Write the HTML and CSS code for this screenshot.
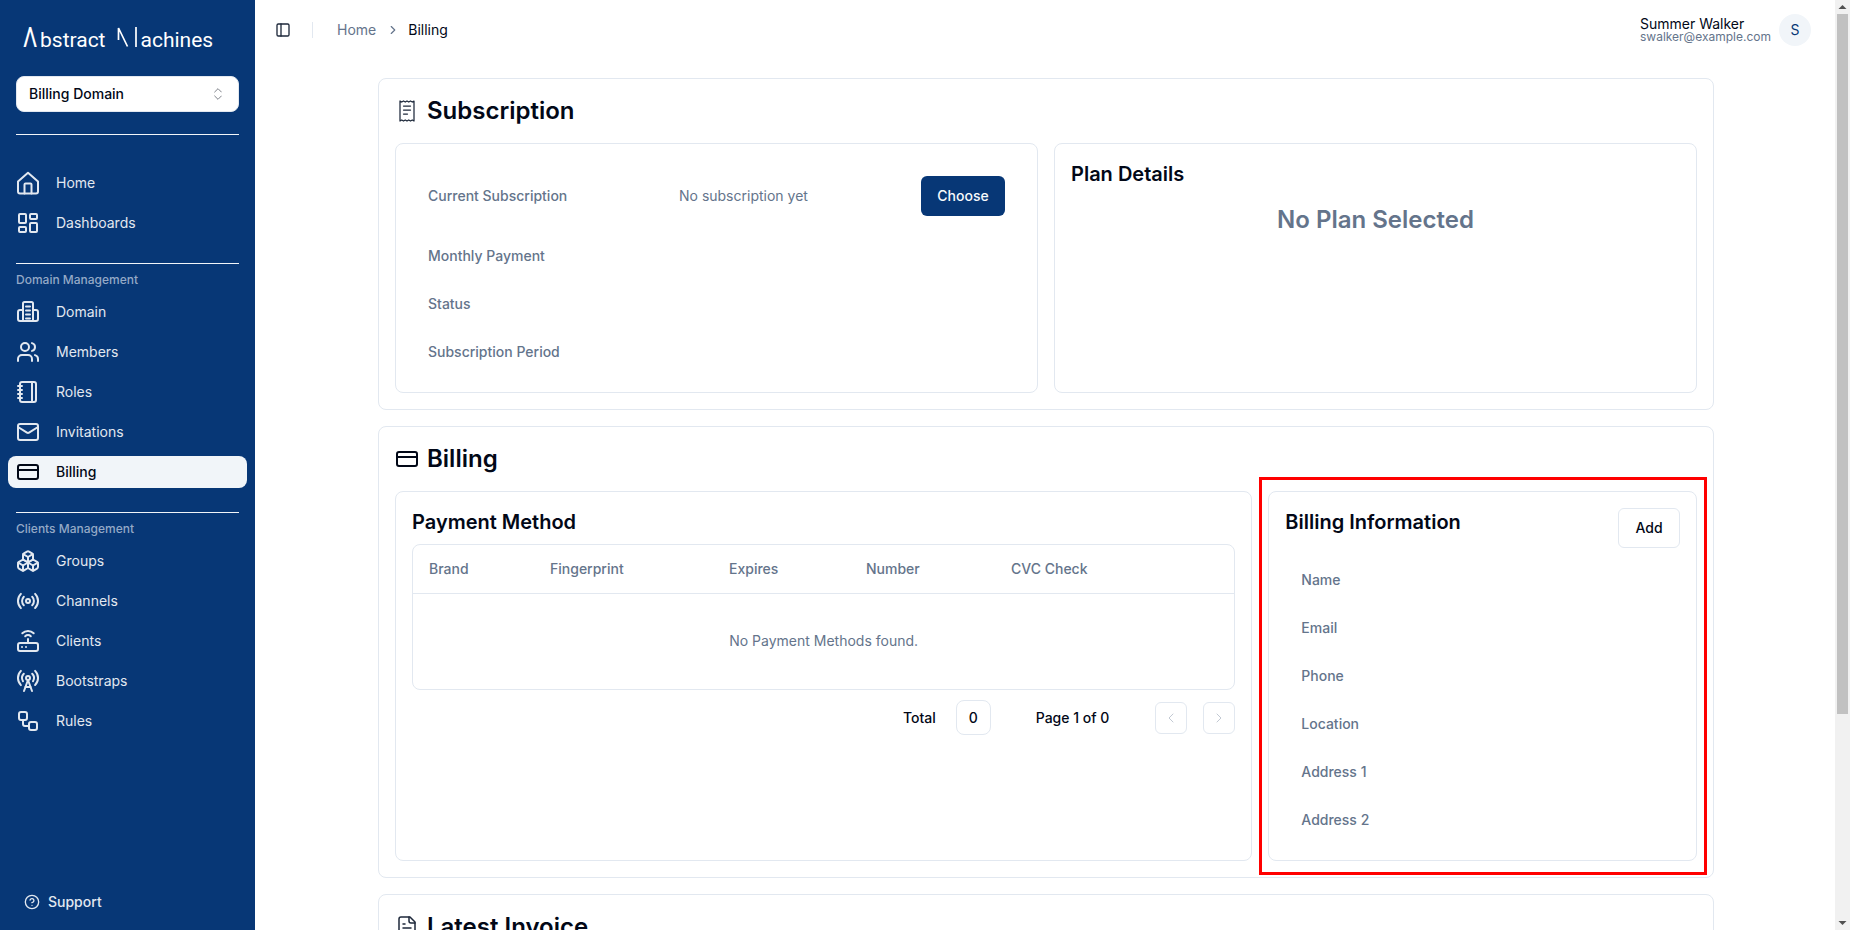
FILE: index.html
```html
<!DOCTYPE html>
<html lang="en">
<head>
<meta charset="utf-8">
<title>Billing</title>
<link rel="stylesheet" href="styles.css">
</head>
<body>
<div class="app">
  <aside class="sidebar">
    <div class="logo"><span class="logo-a">Λ</span><span class="logo-word">bstract</span><svg class="logo-m" viewBox="0 0 20 20" aria-hidden="true"><path d="M1.500 13V1L10.500 19.500M19 0V20"/></svg><span class="logo-word">achines</span></div>
    <button class="select"><span>Billing Domain</span>
      <svg class="ico16 muted-ico" viewBox="0 0 24 24"><path d="m7 15 5 5 5-5"/><path d="m7 9 5-5 5 5"/></svg>
    </button>
    <hr class="rule first">
    <nav class="nav">
      <a class="item"><svg class="ico" viewBox="0 0 24 24"><path d="M2 10.500 12 1.800l10 8.700v10a2 2 0 0 1-2 2H4a2 2 0 0 1-2-2Z"/><path d="M8.500 22.500v-9a1 1 0 0 1 1-1h5a1 1 0 0 1 1 1v9"/></svg>Home</a>
      <a class="item"><svg class="ico" viewBox="0 0 24 24"><rect x="3" y="3" width="7" height="9" rx="1"/><rect x="14" y="3" width="7" height="5" rx="1"/><rect x="14" y="12" width="7" height="9" rx="1"/><rect x="3" y="16" width="7" height="5" rx="1"/></svg>Dashboards</a>
    </nav>
    <hr class="rule">
    <div class="group-label">Domain Management</div>
    <nav class="nav">
      <a class="item"><svg class="ico" viewBox="0 0 24 24"><path d="M7 21V3.500A1.500 1.500 0 0 1 8.500 2h7A1.500 1.500 0 0 1 17 3.500V21"/><path d="M7 10H4a2 2 0 0 0-2 2v7a2 2 0 0 0 2 2h16a2 2 0 0 0 2-2v-7a2 2 0 0 0-2-2h-3"/><path d="M10 6.500h4M10 10.500h4M10 14.500h4M10 18.500h4"/></svg>Domain</a>
      <a class="item"><svg class="ico" viewBox="0 0 24 24"><path d="M16 21v-2a4 4 0 0 0-4-4H6a4 4 0 0 0-4 4v2"/><circle cx="9" cy="7" r="4"/><path d="M22 21v-2a4 4 0 0 0-3-3.870"/><path d="M16 3.130a4 4 0 0 1 0 7.750"/></svg>Members</a>
      <a class="item"><svg class="ico" viewBox="0 0 24 24"><path d="M2 6h4M2 10h4M2 14h4M2 18h4"/><rect x="4" y="2" width="16" height="20" rx="2"/><path d="M16 2v20"/></svg>Roles</a>
      <a class="item"><svg class="ico" viewBox="0 0 24 24"><rect x="2" y="4" width="20" height="16" rx="2"/><path d="m22 7-8.970 5.700a1.940 1.940 0 0 1-2.060 0L2 7"/></svg>Invitations</a>
      <a class="item active"><svg class="ico" viewBox="0 0 24 24"><rect x="2" y="5" width="20" height="14" rx="2"/><path d="M2 10h20"/></svg>Billing</a>
    </nav>
    <hr class="rule">
    <div class="group-label">Clients Management</div>
    <nav class="nav">
      <a class="item"><svg class="ico" viewBox="0 0 24 24"><path d="M2.970 12.920A2 2 0 0 0 2 14.630v3.240a2 2 0 0 0 .97 1.710l3 1.800a2 2 0 0 0 2.060 0L12 19v-5.500l-5-3-4.030 2.420Z"/><path d="m7 16.500-4.740-2.850"/><path d="m7 16.500 5-3"/><path d="M7 16.500v5.170"/><path d="M12 13.500V19l3.970 2.380a2 2 0 0 0 2.060 0l3-1.800a2 2 0 0 0 .97-1.710v-3.240a2 2 0 0 0-.97-1.710L17 10.500l-5 3Z"/><path d="m17 16.500-5-3"/><path d="m17 16.500 4.740-2.850"/><path d="M17 16.500v5.170"/><path d="M7.970 4.420A2 2 0 0 0 7 6.130v4.370l5 3 5-3V6.130a2 2 0 0 0-.97-1.710l-3-1.800a2 2 0 0 0-2.060 0l-3 1.800Z"/><path d="M12 8 7.260 5.150"/><path d="m12 8 4.740-2.850"/><path d="M12 13.500V8"/></svg>Groups</a>
      <a class="item"><svg class="ico" viewBox="0 0 24 24"><path d="M4.900 19.100C1 15.200 1 8.800 4.900 4.900"/><path d="M7.800 16.200c-2.300-2.300-2.300-6.100 0-8.500"/><circle cx="12" cy="12" r="2"/><path d="M16.200 7.800c2.300 2.300 2.300 6.100 0 8.500"/><path d="M19.100 4.900C23 8.800 23 15.100 19.100 19"/></svg>Channels</a>
      <a class="item"><svg class="ico" viewBox="0 0 24 24"><rect x="2" y="14" width="20" height="8" rx="2"/><path d="M6.010 18H6M10.010 18H10M12 10v4"/><path d="M14.800 7.200a4 4 0 0 0-5.600 0"/><path d="M17.700 4.300a8 8 0 0 0-11.400 0"/></svg>Clients</a>
      <a class="item"><svg class="ico" viewBox="0 0 24 24"><path d="M4.900 16.100C1 12.200 1 5.800 4.900 1.900"/><path d="M7.800 4.700a6.140 6.140 0 0 0-.8 7.500"/><circle cx="12" cy="9" r="2"/><path d="M16.200 4.800c2 2 2.260 5.110.8 7.470"/><path d="M19.100 1.900a9.960 9.960 0 0 1 0 14.100"/><path d="M9.500 18h5"/><path d="m8 22 4-11 4 11"/></svg>Bootstraps</a>
      <a class="item"><svg class="ico" viewBox="0 0 24 24"><rect x="3" y="3" width="8" height="8" rx="2"/><path d="M7 11v4a2 2 0 0 0 2 2h4"/><rect x="13" y="13" width="8" height="8" rx="2"/></svg>Rules</a>
    </nav>
    <a class="support"><svg class="ico16" viewBox="0 0 24 24"><circle cx="12" cy="12" r="10"/><path d="M9.090 9a3 3 0 0 1 5.830 1c0 2-3 3-3 3"/><path d="M12 17h.01"/></svg>Support</a>
  </aside>

  <div class="main">
    <header class="topbar">
      <svg class="ico16 dark-ico" viewBox="0 0 24 24"><rect x="3" y="3" width="18" height="18" rx="2"/><path d="M9 3v18"/></svg>
      <span class="vsep"></span>
      <span class="crumb">Home</span>
      <svg class="crumb-chev" viewBox="0 0 24 24"><path d="m9 18 6-6-6-6"/></svg>
      <span class="crumb current">Billing</span>
      <div class="user">
        <div class="user-text"><div class="user-name">Summer Walker</div><div class="user-mail">swalker@example.com</div></div>
        <div class="avatar">S</div>
      </div>
    </header>

    <main class="content">
      <section class="card">
        <h2 class="section-title"><svg class="ico receipt" viewBox="0 0 24 24"><path d="M5 2v20l1.750-1 1.750 1 1.750-1 1.750 1 1.750-1 1.750 1 1.750-1L19 22V2l-1.750 1-1.750-1-1.750 1L12 2l-1.750 1L8.500 2 6.750 3Z"/><path d="M15.500 7h-7M15.500 11h-7M12.500 15h-4"/></svg>Subscription</h2>
        <div class="split-even">
          <div class="panel">
            <div class="sub-first">
              <span class="label">Current Subscription</span>
              <span class="value">No subscription yet</span>
              <button class="btn-primary">Choose</button>
            </div>
            <div class="row-info label">Monthly Payment</div>
            <div class="row-info label">Status</div>
            <div class="row-info label">Subscription Period</div>
          </div>
          <div class="panel">
            <h3 class="panel-title">Plan Details</h3>
            <div class="no-plan">No Plan Selected</div>
          </div>
        </div>
      </section>

      <section class="card">
        <h2 class="section-title"><svg class="ico" viewBox="0 0 24 24"><rect x="2" y="5" width="20" height="14" rx="2"/><path d="M2 10h20"/></svg>Billing</h2>
        <div class="split-wide">
          <div class="panel">
            <h3 class="panel-title">Payment Method</h3>
            <div class="table">
              <div class="thead label"><span>Brand</span><span>Fingerprint</span><span>Expires</span><span>Number</span><span>CVC Check</span></div>
              <div class="tempty value">No Payment Methods found.</div>
            </div>
            <div class="pager">
              <span class="pager-total">Total</span>
              <span class="pager-count">0</span>
              <span class="pager-page">Page 1 of 0</span>
              <span class="pager-btn"><svg class="ico16" viewBox="0 0 24 24"><path d="m15 18-6-6 6-6"/></svg></span>
              <span class="pager-btn"><svg class="ico16" viewBox="0 0 24 24"><path d="m9 18 6-6-6-6"/></svg></span>
            </div>
          </div>
          <div class="panel highlight-host">
            <div class="info-head"><h3 class="panel-title">Billing Information</h3><button class="btn-outline">Add</button></div>
            <div class="info-rows">
              <div class="row-info label">Name</div>
              <div class="row-info label">Email</div>
              <div class="row-info label">Phone</div>
              <div class="row-info label">Location</div>
              <div class="row-info label">Address 1</div>
              <div class="row-info label">Address 2</div>
            </div>
            <div class="highlight"></div>
          </div>
        </div>
      </section>

      <section class="card invoice">
        <h2 class="section-title"><svg class="ico file" viewBox="0 0 24 24"><path d="M15 2H6a2 2 0 0 0-2 2v16a2 2 0 0 0 2 2h12a2 2 0 0 0 2-2V7Z"/><path d="M14 2v4a2 2 0 0 0 2 2h4"/><path d="M16 13H8M16 17H8M10 9H8"/></svg>Latest Invoice</h2>
      </section>
    </main>
  </div>

  <div class="vscroll" aria-hidden="true">
    <svg class="vscroll-arrow" viewBox="0 0 15 14"><path d="M3.500 9 7.500 5l4 4Z"/></svg>
    <div class="vscroll-track"><div class="vscroll-thumb"></div></div>
    <svg class="vscroll-arrow" viewBox="0 0 15 14"><path d="M3.500 5h8l-4 4Z"/></svg>
  </div>
</div>
</body>
</html>
```
FILE: styles.css
```css
* { box-sizing: border-box; }
html, body { margin: 0; height: 100%; overflow: hidden; }
body { font-family: Inter, "Noto Sans", sans-serif; font-size: 14px; line-height: 20px; color: #020817; background: #fff; }
svg { fill: none; stroke: currentColor; stroke-width: 2; stroke-linecap: round; stroke-linejoin: round; flex: none; }
h2, h3 { margin: 0; }
button { font-family: inherit; line-height: inherit; }

.app { display: flex; height: 930px; }

.sidebar { width: 255px; flex: none; background: #073776; color: #e2e8f0; display: flex; flex-direction: column; padding: 27px 8px 18px; }
.logo { display: flex; align-items: baseline; height: 20px; margin: 0 0 29px 15px; color: #fff; font-family: Roboto, sans-serif; font-weight: 400; font-size: 21px; line-height: 20px; }
.logo-a { display: block; width: 17px; font-size: 28px; font-weight: 400; transform: scaleX(.78); transform-origin: left; }
.logo-m { width: 20px; height: 20px; margin: 0 4px 0 11px; stroke-width: 1.7; stroke-linecap: butt; stroke-linejoin: miter; }
.select { display: flex; align-items: center; justify-content: space-between; height: 36px; margin: 0 8px; padding: 0 12px; border: 1px solid #e2e8f0; border-radius: 8px; background: #fff; color: #020817; font-size: 14px; font-weight: 500; }
.muted-ico { color: #020817; opacity: .5; stroke-width: 1.5; }
.rule { border: 0; height: 1px; background: #f1f5f9; margin: 24px 8px 8px; }
.rule.first { margin: 22px 8px 32px; }
.nav { display: flex; flex-direction: column; gap: 8px; }
.item { display: flex; align-items: center; gap: 16px; height: 32px; padding: 0 8px; border-radius: 8px; color: #e2e8f0; font-weight: 400; }
.item.active { background: #f1f5f9; color: #020817; font-weight: 500; }
.ico { width: 24px; height: 24px; stroke-width: 2; }
.ico16 { width: 16px; height: 16px; }
.group-label { height: 16px; margin: 0 8px 8px; font-size: 12px; line-height: 16px; font-weight: 500; color: #94a9c6; }
.support { display: flex; align-items: center; gap: 8px; height: 20px; margin-top: auto; padding-left: 16px; font-weight: 500; color: #e2e8f0; }

.main { flex: 1; min-width: 0; height: 930px; overflow: hidden; }
.vscroll { width: 15px; flex: none; display: flex; flex-direction: column; background: #f1f1f1; }
.vscroll-arrow { width: 15px; height: 14px; color: #505050; fill: currentColor; stroke: none; }
.vscroll-track { flex: 1; padding: 0 2px; }
.vscroll-thumb { height: 700px; background: #c1c1c1; }

.topbar { display: flex; align-items: center; height: 60px; padding: 0 24px 0 20px; }
.dark-ico { color: #1e293b; stroke-width: 2; }
.vsep { width: 1px; height: 16px; background: #e2e8f0; margin: 0 24px 0 21px; }
.crumb { color: #64748b; }
.crumb.current { color: #020817; }
.crumb-chev { width: 14px; height: 14px; margin: 0 8px 0 10px; color: #64748b; stroke-width: 2; }
.user { display: flex; align-items: center; gap: 8px; margin-left: auto; }
.user-text { display: flex; flex-direction: column; }
.user-name { font-size: 14px; line-height: 14px; color: #020817; }
.user-mail { font-size: 12px; line-height: 12px; color: #64748b; }
.avatar { width: 32px; height: 32px; border-radius: 50%; background: #f1f5f9; color: #073776; display: flex; align-items: center; justify-content: center; }

.content { display: flex; flex-direction: column; gap: 16px; padding: 18px 121px 16px 123px; }
.card { border: 1px solid #e2e8f0; border-radius: 8px; padding: 16px; background: #fff; }
.invoice { height: 284px; flex: none; }
.section-title { display: flex; align-items: center; gap: 8px; height: 32px; margin-bottom: 16px; font-size: 24px; line-height: 32px; font-weight: 600; }
.receipt { stroke-width: 1.25; color: #1e293b; }
.file { stroke-width: 1.5; color: #1e293b; }
.split-even { display: grid; grid-template-columns: 1fr 1fr; gap: 16px; }
.split-wide { display: grid; grid-template-columns: 2fr 1fr; gap: 16px; }
.panel { border: 1px solid #e2e8f0; border-radius: 8px; padding: 16px; min-width: 0; }
.panel-title { height: 28px; font-size: 20px; line-height: 28px; font-weight: 600; }
.label { color: #64748b; font-weight: 500; }
.value { color: #64748b; font-weight: 400; }
.sub-first { display: grid; grid-template-columns: 251px 242px 1fr; align-items: center; height: 72px; padding-left: 16px; }
.row-info { display: flex; align-items: center; height: 48px; padding-left: 16px; }
.btn-primary { width: 84px; height: 40px; border: 0; border-radius: 6px; background: #073776; color: #f8fafc; font-size: 14px; font-weight: 500; }
.btn-outline { width: 62px; height: 40px; border: 1px solid #e2e8f0; border-radius: 6px; background: #fff; color: #020817; font-size: 14px; font-weight: 500; }
.no-plan { margin-top: 16px; text-align: center; font-size: 24px; line-height: 32px; font-weight: 600; color: #64748b; }

.table { margin-top: 8px; border: 1px solid #e2e8f0; border-radius: 8px; }
.thead { display: grid; grid-template-columns: 121px 179px 137px 145px 1fr; align-items: center; height: 49px; padding-left: 16px; border-bottom: 1px solid #e2e8f0; }
.tempty { display: flex; align-items: center; justify-content: center; height: 95px; padding-bottom: 2px; }
.pager { display: flex; align-items: center; margin-top: 10px; font-weight: 500; }
.pager-total { margin-left: auto; }
.pager-count { display: flex; align-items: center; justify-content: center; width: 35px; height: 35px; margin: 0 45px 0 20px; border: 1px solid #e2e8f0; border-radius: 8px; }
.pager-page { margin-right: 46px; }
.pager-btn { display: flex; align-items: center; justify-content: center; width: 32px; height: 32px; margin-left: 16px; border: 1px solid #e2e8f0; border-radius: 6px; color: #c2c9d3; }
.pager-page + .pager-btn { margin-left: 0; }
.pager-btn .ico16 { stroke-width: 1.5; }

.info-head { display: flex; justify-content: space-between; align-items: flex-start; height: 40px; margin-bottom: 8px; }
.highlight-host { position: relative; }
.highlight { position: absolute; left: -10px; top: -15px; right: -11px; bottom: -15px; border: 3px solid #f00; pointer-events: none; }
```
